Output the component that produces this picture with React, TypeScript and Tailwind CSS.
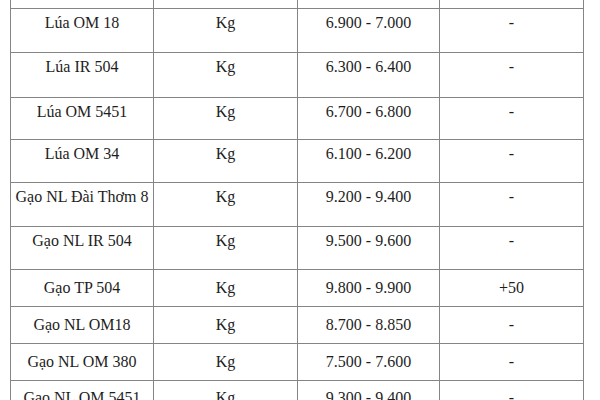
const rows = [
  { name: "Lúa OM 18", price: "6.900 - 7.000", change: "-", h: "h-[44px]", pt: "pt-[2px]" },
  { name: "Lúa IR 504", price: "6.300 - 6.400", change: "-", h: "h-[45px]", pt: "pt-[2px]" },
  { name: "Lúa OM 5451", price: "6.700 - 6.800", change: "-", h: "h-[42px]", pt: "pt-[2px]" },
  { name: "Lúa OM 34", price: "6.100 - 6.200", change: "-", h: "h-[43px]", pt: "pt-[2px]" },
  { name: "Gạo NL Đài Thơm 8", price: "9.200 - 9.400", change: "-", h: "h-[44px]", pt: "pt-[2px]" },
  { name: "Gạo NL IR 504", price: "9.500 - 9.600", change: "-", h: "h-[43px]", pt: "pt-[2px]" },
  { name: "Gạo TP 504", price: "9.800 - 9.900", change: "+50", h: "h-[37px]", pt: "pt-[6px]" },
  { name: "Gạo NL OM18", price: "8.700 - 8.850", change: "-", h: "h-[37px]", pt: "pt-[6px]" },
  { name: "Gạo NL OM 380", price: "7.500 - 7.600", change: "-", h: "h-[37px]", pt: "pt-[6px]" },
  { name: "Gạo NL OM 5451", price: "9.300 - 9.400", change: "-", h: "h-[44px]", pt: "pt-[5px]" },
];

const grid = "grid grid-cols-[143px_144px_142px_144px] border-l border-b border-[#858585]";
const cell = "border-r border-[#858585] text-center";

export default function App() {
  return (
    <div className="w-[600px] h-[400px] overflow-hidden bg-white pl-[10px] font-['Liberation_Serif','Times_New_Roman',serif] text-[16px] leading-[24px] text-[#1e1e1e]">
      <div className="w-[574px]">
        <div className={`${grid} h-[9px]`}>
          <div className={cell} />
          <div className={cell} />
          <div className={cell} />
          <div className={cell} />
        </div>
        {rows.map((r) => (
          <div key={r.name} className={`${grid} ${r.h}`}>
            <div className={`${cell} ${r.pt}`}>{r.name}</div>
            <div className={`${cell} ${r.pt}`}>Kg</div>
            <div className={`${cell} ${r.pt}`}>{r.price}</div>
            <div className={`${cell} ${r.pt}`}>{r.change}</div>
          </div>
        ))}
      </div>
    </div>
  );
}
